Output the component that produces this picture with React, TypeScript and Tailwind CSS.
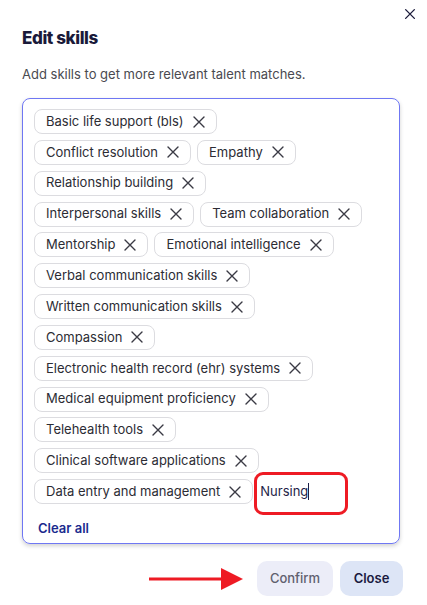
import React from "react";

const skills = [
  "Basic life support (bls)",
  "Conflict resolution",
  "Empathy",
  "Relationship building",
  "Interpersonal skills",
  "Team collaboration",
  "Mentorship",
  "Emotional intelligence",
  "Verbal communication skills",
  "Written communication skills",
  "Compassion",
  "Electronic health record (ehr) systems",
  "Medical equipment proficiency",
  "Telehealth tools",
  "Clinical software applications",
  "Data entry and management",
];

function XIcon({ size = 16, stroke = "#3a3a44", sw = 1.5 }: { size?: number; stroke?: string; sw?: number }) {
  return (
    <svg width={size} height={size} viewBox="0 0 16 16" fill="none">
      <path d="M3 3L13 13M13 3L3 13" stroke={stroke} strokeWidth={sw} strokeLinecap="round" />
    </svg>
  );
}

export default function App() {
  return (
    <div
      className="w-[427px] h-[605px] bg-white overflow-hidden"
      style={{ fontFamily: "Inter, 'Liberation Sans', sans-serif" }}
    >
      <div className="flex justify-end pt-[7px] pr-[10px]">
        <XIcon size={14} stroke="#1c1c3c" sw={1.6} />
      </div>
      <h1 className="mt-[5px] ml-[22px] text-[17px] leading-[24px] font-extrabold text-[#1a1a3a] tracking-[-0.4px]">
        Edit skills
      </h1>
      <p className="mt-[14px] ml-[22px] text-[13px] leading-[20px] text-[#4a4a50]">
        Add skills to get more relevant talent matches.
      </p>
      <div className="mt-[14px] ml-[22px] w-[378px] border border-[#6f77f3] rounded-lg pt-[10px] pl-[11px] pr-[30px] pb-[5px] shadow-[0_2px_4px_rgba(0,0,0,0.18)]">
        <div className="flex flex-wrap gap-x-[6px] gap-y-[5.85px]">
          {skills.map((s) => (
            <div
              key={s}
              className="h-[25px] flex items-center gap-[7px] pl-[11px] pr-[9px] border border-[#dcdce0] rounded-lg bg-white text-[13px] text-[#2c2c34]"
            >
              <span className="whitespace-nowrap">{s}</span>
              <XIcon size={16} stroke="#3a3a44" sw={1.4} />
            </div>
          ))}
          <div className="relative flex-1 min-w-[80px] h-[25px] flex items-center pl-[1px]">
            <span className="text-[13px] text-[#1e1e48]">Nursing</span>
            <span className="w-[1px] h-[17px] bg-[#1e1e48]"></span>
            <div className="absolute left-[-5px] top-[-7px] w-[94px] h-[43px] border-[3px] border-[#ee1b24] rounded-[9px]"></div>
          </div>
        </div>
        <div className="mt-[14px] pl-[4px] text-[13px] leading-[20px] font-semibold text-[#1b2a8e]">Clear all</div>
      </div>
      <div className="mt-[17px] flex justify-end items-center pr-[24px]">
        <svg width="96" height="24" viewBox="0 0 96 24" className="mr-[12px]">
          <rect x="0" y="10.5" width="76" height="3" fill="#ee1b24" />
          <path d="M72 1L94 12L72 23Z" fill="#ee1b24" />
        </svg>
        <button className="h-[35px] w-[76px] rounded-[10px] bg-[#ecedf8] text-[13px] font-medium text-[#60606e]">
          Confirm
        </button>
        <button className="ml-[7px] h-[35px] w-[63px] rounded-[10px] bg-[#dde5f6] text-[13px] font-semibold text-[#1a1a40]">
          Close
        </button>
      </div>
    </div>
  );
}
